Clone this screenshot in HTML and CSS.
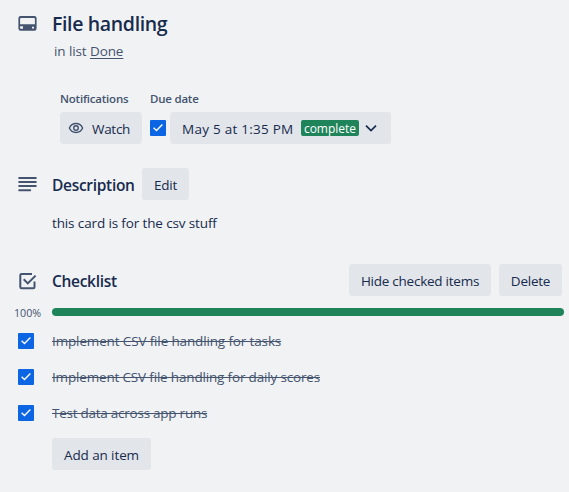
FILE: index.html
```html
<!DOCTYPE html>
<html lang="en">
<head>
<meta charset="utf-8">
<title>File handling</title>
<link rel="stylesheet" href="styles.css">
</head>
<body>
<svg class="symbols" aria-hidden="true">
  <symbol id="check" viewBox="0 0 16 16"><path d="M3.6 7.800 6.500 10.500 12.400 4.600" fill="none" stroke="#fff" stroke-width="1.400"/></symbol>
</svg>
<main class="card">
  <header class="row title-row">
    <svg class="icon" viewBox="0 0 20 20"><path fill="#44546f" fill-rule="evenodd" d="M2.700 3h13.600a2.300 2.300 0 0 1 2.300 2.300v10.200a2.300 2.300 0 0 1-2.300 2.300h-13.600a2.300 2.300 0 0 1-2.300-2.300v-10.200a2.300 2.300 0 0 1 2.300-2.300zM3 5a.9.9 0 0 0-.9.9V11.200h14.800V5.900a.9.9 0 0 0-.9-.9zM2.100 13.300v1.600q0 .9.9.9h8.500v-2.500zM14 13.800v1.800h2v-1.800z"/><path fill="#44546f" d="M5 13h8v3.500H5z"/></svg>
    <h1><span class="t-title">File handling</span></h1>
  </header>
  <p class="list-name"><span class="t-list">in list <a>Done</a></span></p>

  <section class="details">
    <div class="detail">
      <h3>Notifications</h3>
      <button class="btn btn-watch">
        <svg class="eye" viewBox="0 0 16 16"><g fill="none" stroke="#44546f" stroke-width="1.400"><path d="M1.400 8C2.700 4.900 5 3.500 8 3.500S13.300 4.900 14.600 8C13.300 11.100 11 12.500 8 12.500S2.700 11.100 1.400 8z"/><circle cx="8" cy="8" r="2.300"/></g></svg>
        <span class="t-watch">Watch</span>
      </button>
    </div>
    <div class="detail">
      <h3>Due date</h3>
      <div class="due">
        <svg class="checkbox"><use href="#check"/></svg>
        <button class="btn btn-date"><span class="t-date">May 5 at 1:35 PM</span><span class="badge">complete</span><svg class="chevron" viewBox="0 0 16 16"><path d="M3 5.600 8 10.600 13 5.600" fill="none" stroke="#172b4d" stroke-width="1.700"/></svg></button>
      </div>
    </div>
  </section>

  <section class="row description-row">
    <svg class="icon" viewBox="0 0 20 20"><path d="M1.200 4h16.600M1.200 8h16.600M1.200 12h16.600M1.200 16.200h11" fill="none" stroke="#44546f" stroke-width="2" stroke-linecap="round"/></svg>
    <h2><span class="t-desc">Description</span></h2>
    <button class="btn"><span class="t-edit">Edit</span></button>
  </section>
  <p class="description"><span class="t-body">this card is for the csv stuff</span></p>

  <section class="row checklist-row">
    <svg class="icon" viewBox="0 0 20 20"><g fill="none" stroke="#44546f" stroke-width="2"><path d="M14 4H3.600Q2.300 4 2.300 5.200V17.100Q2.300 18.300 3.600 18.300H15.300Q16.500 18.300 16.500 17.100V11.500"/><path d="M5.700 9.300 9.800 13.400 17.600 5.600"/></g></svg>
    <h2><span class="t-check">Checklist</span></h2>
    <div class="actions">
      <button class="btn btn-hide"><span class="t-hide">Hide checked items</span></button>
      <button class="btn btn-delete"><span class="t-delete">Delete</span></button>
    </div>
  </section>
  <div class="progress"><span class="percent">100%</span><div class="bar"></div></div>
  <ul class="items">
    <li><svg class="checkbox"><use href="#check"/></svg><s class="t-item1">Implement CSV file handling for tasks</s></li>
    <li><svg class="checkbox"><use href="#check"/></svg><s class="t-item2">Implement CSV file handling for daily scores</s></li>
    <li><svg class="checkbox"><use href="#check"/></svg><s class="t-item3">Test data across app runs</s></li>
  </ul>
  <button class="btn btn-add"><span class="t-add">Add an item</span></button>
</main>
</body>
</html>
```
FILE: styles.css
```css
* { box-sizing: border-box; margin: 0; padding: 0; }
body {
  width: 569px;
  height: 492px;
  overflow: hidden;
  background: #f1f2f4;
  color: #172b4d;
  font: 13.5px/20px "Open Sans", "Noto Sans", sans-serif;
}
.symbols { display: none; }
.card { padding: 12px 5px 0 0; }
.row { display: flex; align-items: center; padding-left: 18px; }
.icon { width: 20px; height: 20px; margin-right: 14px; flex: none; }
.title-row .icon { margin-top: -2px; }
h1 { font-size: 19.5px; line-height: 24px; font-weight: 600; letter-spacing: -0.35px; }
h2 { font-size: 15.5px; line-height: 20px; font-weight: 600; white-space: nowrap; padding-top: 2px; }
h3 { font-size: 11.5px; line-height: 16px; font-weight: 600; color: #44546f; margin-bottom: 5px; white-space: nowrap; letter-spacing: -0.22px; }
.list-name { padding-left: 54px; margin-top: 5px; color: #44546f; }
.list-name a { text-decoration: underline; text-underline-offset: 2px; }
.details { display: flex; gap: 8px; margin: 30px 0 0 60px; }
.btn {
  display: inline-flex;
  align-items: center;
  justify-content: center;
  height: 32px;
  padding: 1px 0 0;
  border: 0;
  border-radius: 3px;
  background: #e2e5ea;
  color: #172b4d;
  font: inherit;
  white-space: nowrap;
}
.btn-watch { width: 82px; padding-left: 8px; justify-content: flex-start; }
.eye { width: 16px; height: 16px; margin: -1px 8px 0 0; flex: none; }
.due { display: flex; align-items: center; gap: 4px; }
.checkbox { width: 16px; height: 16px; flex: none; background: #0c66e4; border-radius: 1px; }
.btn-date { width: 221px; padding-left: 12px; justify-content: flex-start; }
.t-date { width: 111px; }
.badge {
  width: 58px;
  height: 16px;
  margin: -1px 0 0 8px;
  border-radius: 2px;
  background: #1f845a;
  color: #fff;
  font-size: 12px;
  line-height: 17px;
  text-align: center;
}
.chevron { width: 16px; height: 16px; margin: -1px 0 0 4px; }
.description-row { margin-top: 24px; }
.description-row h2 { width: 83px; }
.description-row .btn { width: 47px; margin-left: 7px; }
.description { margin-top: 13px; padding-left: 52px; }
.checklist-row { margin-top: 31px; padding-right: 2px; }
.actions { display: flex; gap: 8px; margin-left: auto; }
.btn-hide { width: 142px; }
.btn-delete { width: 63px; }
.progress { display: flex; align-items: center; height: 16px; margin-top: 8px; }
.percent { width: 52px; padding-left: 14px; font-size: 10.7px; line-height: 16px; color: #44546f; margin-top: 2px; }
.bar { flex: 1; height: 8px; border-radius: 4px; background: #1f845a; }
.items { list-style: none; margin-top: 3px; }
.items li { display: flex; align-items: center; gap: 18px; height: 36px; padding-left: 18px; color: #44546f; }
.btn-add { width: 99px; margin: 7px 0 0 52px; }
.t-list { letter-spacing: -0.1px; }
.t-watch { letter-spacing: -0.3px; }
.t-date { letter-spacing: 0.25px; }
.t-desc { letter-spacing: -0.3px; }
.t-edit, .t-hide, .t-delete { letter-spacing: -0.25px; }
.t-body { letter-spacing: -0.13px; }
.t-check { letter-spacing: -0.3px; }
.t-item1 { letter-spacing: -0.14px; }
.t-item2 { letter-spacing: -0.17px; }
.t-item3 { letter-spacing: -0.25px; }
.t-add { letter-spacing: -0.1px; }
```
